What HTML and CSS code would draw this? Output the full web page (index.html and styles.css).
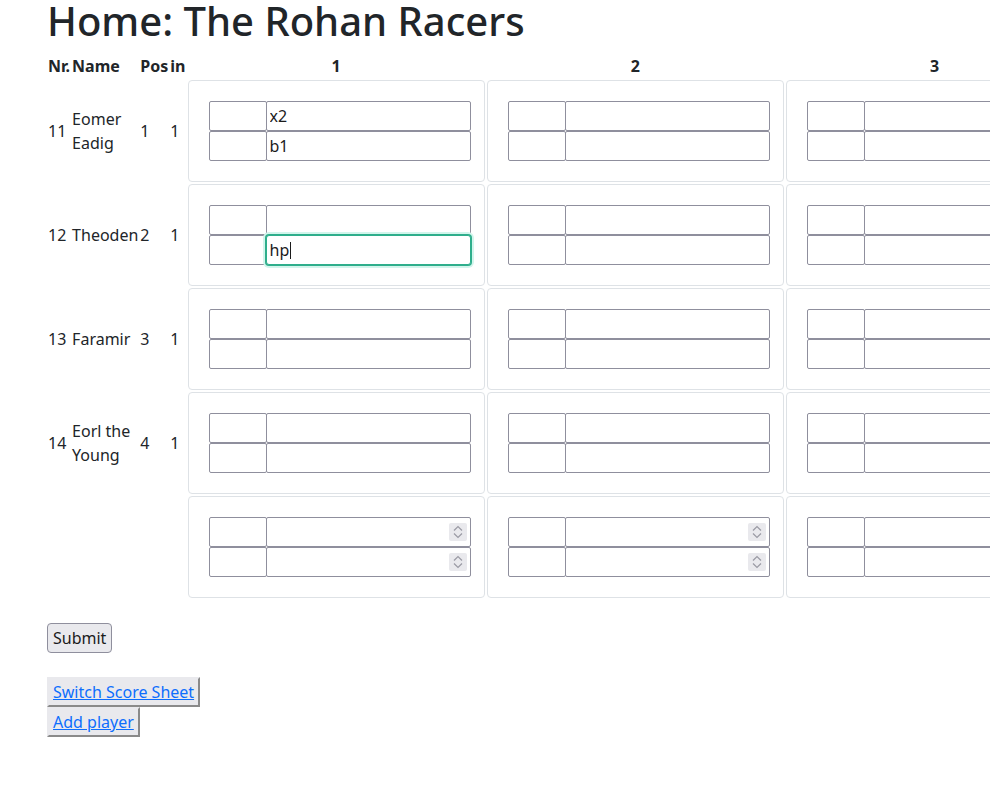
FILE: index.html
```html
<!DOCTYPE html>
<html lang="en">
<head>
<meta charset="utf-8">
<title>Home: The Rohan Racers</title>
<link rel="stylesheet" href="styles.css">
</head>
<body>
<div class="page">
  <h1 class="title">Home: The Rohan Racers</h1>
  <form class="sheet-form">
    <table class="sheet">
      <thead>
        <tr>
          <th>Nr.</th>
          <th>Name</th>
          <th>Pos</th>
          <th>in</th>
          <th class="col-head">1</th>
          <th class="col-head">2</th>
          <th class="col-head">3</th>
        </tr>
      </thead>
      <tbody>
        <tr>
          <td>11</td>
          <td>Eomer Eadig</td>
          <td>1</td>
          <td>1</td>
          <td class="card"><div class="pair"><div class="line"><input class="in-s"><input class="in-l" value="x2"></div><div class="line"><input class="in-s"><input class="in-l" value="b1"></div></div></td>
          <td class="card"><div class="pair"><div class="line"><input class="in-s"><input class="in-l"></div><div class="line"><input class="in-s"><input class="in-l"></div></div></td>
          <td class="card"><div class="pair"><div class="line"><input class="in-s"><input class="in-l"></div><div class="line"><input class="in-s"><input class="in-l"></div></div></td>
        </tr>
        <tr>
          <td>12</td>
          <td>Theoden</td>
          <td>2</td>
          <td>1</td>
          <td class="card"><div class="pair"><div class="line"><input class="in-s"><input class="in-l"></div><div class="line"><input class="in-s"><span class="focus-wrap"><input class="in-l focused" value="hp"><span class="caret"></span></span></div></div></td>
          <td class="card"><div class="pair"><div class="line"><input class="in-s"><input class="in-l"></div><div class="line"><input class="in-s"><input class="in-l"></div></div></td>
          <td class="card"><div class="pair"><div class="line"><input class="in-s"><input class="in-l"></div><div class="line"><input class="in-s"><input class="in-l"></div></div></td>
        </tr>
        <tr>
          <td>13</td>
          <td>Faramir</td>
          <td>3</td>
          <td>1</td>
          <td class="card"><div class="pair"><div class="line"><input class="in-s"><input class="in-l"></div><div class="line"><input class="in-s"><input class="in-l"></div></div></td>
          <td class="card"><div class="pair"><div class="line"><input class="in-s"><input class="in-l"></div><div class="line"><input class="in-s"><input class="in-l"></div></div></td>
          <td class="card"><div class="pair"><div class="line"><input class="in-s"><input class="in-l"></div><div class="line"><input class="in-s"><input class="in-l"></div></div></td>
        </tr>
        <tr>
          <td>14</td>
          <td>Eorl the Young</td>
          <td>4</td>
          <td>1</td>
          <td class="card"><div class="pair"><div class="line"><input class="in-s"><input class="in-l"></div><div class="line"><input class="in-s"><input class="in-l"></div></div></td>
          <td class="card"><div class="pair"><div class="line"><input class="in-s"><input class="in-l"></div><div class="line"><input class="in-s"><input class="in-l"></div></div></td>
          <td class="card"><div class="pair"><div class="line"><input class="in-s"><input class="in-l"></div><div class="line"><input class="in-s"><input class="in-l"></div></div></td>
        </tr>
        <tr>
          <td></td>
          <td></td>
          <td></td>
          <td></td>
          <td class="card"><div class="pair">
            <div class="line"><input class="in-s"><span class="num-wrap"><input class="in-l" inputmode="numeric"><span class="spin"><svg viewBox="0 0 18 18" width="18" height="18"><path d="M5 7.5 9 3.5 13 7.5M5 10.5 9 14.5 13 10.5" fill="none" stroke="#9a9aa4" stroke-width="1.2"/></svg></span></span></div>
            <div class="line"><input class="in-s"><span class="num-wrap"><input class="in-l" inputmode="numeric"><span class="spin"><svg viewBox="0 0 18 18" width="18" height="18"><path d="M5 7.5 9 3.5 13 7.5M5 10.5 9 14.5 13 10.5" fill="none" stroke="#9a9aa4" stroke-width="1.2"/></svg></span></span></div>
          </div></td>
          <td class="card"><div class="pair">
            <div class="line"><input class="in-s"><span class="num-wrap"><input class="in-l" inputmode="numeric"><span class="spin"><svg viewBox="0 0 18 18" width="18" height="18"><path d="M5 7.5 9 3.5 13 7.5M5 10.5 9 14.5 13 10.5" fill="none" stroke="#9a9aa4" stroke-width="1.2"/></svg></span></span></div>
            <div class="line"><input class="in-s"><span class="num-wrap"><input class="in-l" inputmode="numeric"><span class="spin"><svg viewBox="0 0 18 18" width="18" height="18"><path d="M5 7.5 9 3.5 13 7.5M5 10.5 9 14.5 13 10.5" fill="none" stroke="#9a9aa4" stroke-width="1.2"/></svg></span></span></div>
          </div></td>
          <td class="card"><div class="pair">
            <div class="line"><input class="in-s"><span class="num-wrap"><input class="in-l" inputmode="numeric"><span class="spin"><svg viewBox="0 0 18 18" width="18" height="18"><path d="M5 7.5 9 3.5 13 7.5M5 10.5 9 14.5 13 10.5" fill="none" stroke="#9a9aa4" stroke-width="1.2"/></svg></span></span></div>
            <div class="line"><input class="in-s"><span class="num-wrap"><input class="in-l" inputmode="numeric"><span class="spin"><svg viewBox="0 0 18 18" width="18" height="18"><path d="M5 7.5 9 3.5 13 7.5M5 10.5 9 14.5 13 10.5" fill="none" stroke="#9a9aa4" stroke-width="1.2"/></svg></span></span></div>
          </div></td>
        </tr>
      </tbody>
    </table>
    <button type="button" class="submit">Submit</button>
  </form>
  <div class="links">
    <button type="button" class="link-btn"><a href="#">Switch Score Sheet</a></button>
    <button type="button" class="link-btn"><a href="#">Add player</a></button>
  </div>
</div>
</body>
</html>
```
FILE: styles.css
```css
html {
  overflow: hidden;
}
body {
  margin: 0;
  font-family: "Noto Sans", "Open Sans", sans-serif;
  font-size: 16px;
  line-height: 24px;
  color: #212529;
  background: #fff;
}
.page {
  padding-left: 47px;
}
.title {
  margin: 0 0 10px 0;
  font-size: 40px;
  line-height: 42px;
  font-weight: 500;
  white-space: nowrap;
}
.sheet {
  border-collapse: separate;
  border-spacing: 2px;
  margin-left: -1px;
}
.sheet th,
.sheet td {
  padding: 0;
}
.sheet th {
  font-weight: 700;
  text-align: left;
}
.sheet th.col-head {
  text-align: center;
}
.sheet td {
  text-align: left;
  vertical-align: middle;
}
.sheet td.card {
  border: 1px solid #dee2e6;
  border-radius: 4px;
  padding: 20px 13px 20px 20px;
}
.pair {
  width: 262.25px;
  display: flex;
  flex-direction: column;
}
.line {
  display: flex;
}
.in-s,
.in-l {
  box-sizing: border-box;
  height: 30px;
  border: 1px solid #8f8f9d;
  border-radius: 2px;
  padding: 0 3px;
  font-family: "Noto Sans", "Open Sans", sans-serif;
  font-size: 16px;
  color: #1b1b1b;
  background: #fff;
  margin: 0;
  outline: none;
}
.in-s {
  width: 58px;
}
.in-l {
  width: 205.25px;
  margin-left: -1px;
}
.num-wrap,
.focus-wrap {
  position: relative;
  display: flex;
}
.focus-wrap .in-l {
  margin-left: 0;
}
.focus-wrap {
  margin-left: -1px;
}
.spin {
  position: absolute;
  right: 4px;
  top: 6px;
  width: 18px;
  height: 18px;
  background: #e9e9ed;
  border-radius: 2px;
  display: flex;
}
.in-l.focused {
  border: 1px solid #2fae8c;
  border-radius: 3px;
  box-shadow: 0 0 0 1px #2fae8c, 0 0 0 3px #d2f5ec;
}
.caret {
  position: absolute;
  left: 24px;
  top: 7px;
  width: 1px;
  height: 17px;
  background: #1b1b1b;
}
.submit {
  margin-top: 23px;
  font-family: "Noto Sans", "Open Sans", sans-serif;
  font-size: 16px;
  line-height: 24px;
  color: #1b1b1b;
  background: #e9e9ed;
  border: 1px solid #8f8f9d;
  border-radius: 4px;
  padding: 2px 5px;
  height: 30px;
}
.links {
  margin-top: 24px;
  display: flex;
  flex-direction: column;
  align-items: flex-start;
}
.link-btn {
  font-family: "Noto Sans", "Open Sans", sans-serif;
  font-size: 16px;
  line-height: 24px;
  background: #e9e9ed;
  border: 2px solid;
  border-color: #e9e9ed #8a8a8a #8a8a8a #e9e9ed;
  border-radius: 0;
  padding: 1px 4px;
  height: 30px;
}
.link-btn a {
  color: #0d6efd;
  text-decoration: underline;
}
```
